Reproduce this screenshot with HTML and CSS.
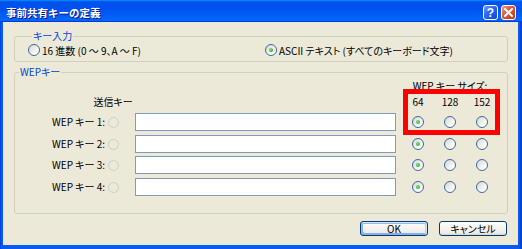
FILE: index.html
```html
<!DOCTYPE html>
<html lang="ja">
<head>
<meta charset="utf-8">
<title>事前共有キーの定義</title>
<link rel="stylesheet" href="styles.css">
</head>
<body>
<div class="window">
  <div class="titlebar">
    <span class="title">事前共有キーの定義</span>
    <div class="controls">
      <span class="tbtn help">?</span>
      <span class="tbtn close"><svg width="9" height="9" viewBox="0 0 9 9"><path d="M1 1 L8 8 M8 1 L1 8" stroke="#fff" stroke-width="2" stroke-linecap="square"/></svg></span>
    </div>
  </div>
  <div class="frame">
    <div class="client">
      <fieldset class="group g1">
        <legend>キー入力</legend>
        <div class="inputrow">
          <label class="opt first"><span class="radio"></span>16 進数 (0 ～ 9、A ～ F)</label>
          <label class="opt"><span class="radio checked"></span>ASCII テキスト (すべてのキーボード文字)</label>
        </div>
      </fieldset>
      <fieldset class="group g2">
        <legend>WEPキー</legend>
        <div class="keyrow head1">
          <div class="sizehead">WEP キー サイズ:</div>
        </div>
        <div class="keyrow head2">
          <div class="txhead"><span>送信キー</span></div>
          <div class="sz s64">64</div>
          <div class="sz">128</div>
          <div class="sz">152</div>
        </div>
        <div class="keyrow key">
          <div class="klabel">WEP キー 1:</div>
          <span class="dradio"></span>
          <span class="field"></span>
          <span class="radio checked"></span>
          <span class="radio"></span>
          <span class="radio"></span>
        </div>
        <div class="keyrow key">
          <div class="klabel">WEP キー 2:</div>
          <span class="dradio"></span>
          <span class="field"></span>
          <span class="radio checked"></span>
          <span class="radio"></span>
          <span class="radio"></span>
        </div>
        <div class="keyrow key">
          <div class="klabel">WEP キー 3:</div>
          <span class="dradio"></span>
          <span class="field"></span>
          <span class="radio checked"></span>
          <span class="radio"></span>
          <span class="radio"></span>
        </div>
        <div class="keyrow key">
          <div class="klabel">WEP キー 4:</div>
          <span class="dradio"></span>
          <span class="field"></span>
          <span class="radio checked"></span>
          <span class="radio"></span>
          <span class="radio"></span>
        </div>
      </fieldset>
      <div class="buttons">
        <button class="btn default">OK</button>
        <button class="btn">キャンセル</button>
      </div>
    </div>
  </div>
  <div class="annot"></div>
</div>
</body>
</html>
```
FILE: styles.css
```css
* { box-sizing: border-box; }
html, body { margin: 0; padding: 0; }
body {
  width: 522px;
  height: 249px;
  overflow: hidden;
  background: #ffffff;
  font-family: "Noto Sans CJK JP", "Liberation Sans", sans-serif;
  font-size: 10px;
  font-feature-settings: "palt";
  color: #000;
}
.window {
  position: relative;
  width: 522px;
  height: 249px;
  display: flex;
  flex-direction: column;
}
.titlebar {
  height: 22px;
  flex: none;
  display: flex;
  align-items: flex-start;
  padding: 0 6px 0 6px;
  background: linear-gradient(180deg, #0997ff, #0053ee 8%, #0050ee 40%, #0066ff 88%, #0066ff 93%, #005bff 95%, #003dd7 96%, #003dd7);
}
.title {
  margin-top: 6px;
  color: #fff;
  font-weight: bold;
  font-size: 10.5px;
  line-height: 13px;
  font-feature-settings: normal;
  text-shadow: 1px 1px #0f1089;
}
.controls {
  margin-left: auto;
  margin-top: 5px;
  display: flex;
  gap: 3px;
}
.tbtn {
  width: 15px;
  height: 15px;
  border: 1px solid #fff;
  border-radius: 3px;
  display: flex;
  align-items: center;
  justify-content: center;
  color: #fff;
  font-family: "Liberation Sans", sans-serif;
  font-weight: bold;
  font-size: 12px;
  line-height: 1;
}
.help {
  background: linear-gradient(135deg, #6a9cff, #2a66f4 45%, #0c47d8);
}
.close {
  background: linear-gradient(135deg, #f0a28a, #e05a34 40%, #c33a16);
}
.frame {
  flex: 1;
  display: flex;
  padding: 0 4px 4px 3px;
  background: linear-gradient(90deg, #0040d8, #0a5cf0 2px, #0a5cf0 calc(100% - 3px), #0032c8);
}
.client {
  flex: 1;
  display: flex;
  flex-direction: column;
  background: #ece9d8;
  padding: 8px 10px 0 11px;
}
.group {
  margin: 0;
  min-width: 0;
  border: 1px solid #d0d0bf;
  border-radius: 3px;
}
.group legend {
  margin-left: 4px;
  padding: 0 1px;
  line-height: 12px;
  color: #0046d5;
}
.g1 {
  padding: 0 0 3px 13px;
}
.inputrow {
  display: flex;
  height: 16px;
  align-items: center;
}
.opt {
  display: flex;
  align-items: center;
  gap: 2px;
  white-space: nowrap;
}
.opt.first { width: 237px; }
.radio {
  display: block;
  width: 12px;
  height: 12px;
  border-radius: 50%;
  border: 1px solid #3a6aa0;
  background: linear-gradient(135deg, #d8d6cc, #ffffff 80%);
  position: relative;
  flex: none;
}
.radio.checked::after {
  content: "";
  position: absolute;
  left: 3px;
  top: 3px;
  width: 4px;
  height: 4px;
  border-radius: 50%;
  background: radial-gradient(circle at 40% 40%, #7ee07a, #1fa31f);
}
.g2 {
  margin-top: 4px;
  padding: 2px 0 13px 0;
}
.keyrow {
  display: grid;
  grid-template-columns: 90px 16px 281px 32px 32px 32px;
  align-items: start;
}
.head1 { height: 16px; }
.head2 { height: 17px; }
.key { height: 21.667px; }
.sizehead {
  grid-column: 4 / 7;
  text-align: center;
  line-height: 12px;
  white-space: nowrap;
}
.txhead {
  grid-column: 2;
  display: flex;
  justify-content: center;
  white-space: nowrap;
  line-height: 12px;
}
.sz {
  text-align: center;
  line-height: 12px;
}
.sz.s64 { grid-column: 4; }
.klabel {
  text-align: right;
  line-height: 18px;
  white-space: nowrap;
}
.dradio {
  justify-self: center;
  margin-top: 4px;
  width: 11px;
  height: 11px;
  border-radius: 50%;
  border: 1px solid #d2cfc2;
  background: #ebe8dc;
}
.field {
  display: block;
  margin-left: 14px;
  width: 261px;
  height: 18px;
  border: 1px solid #7f9db9;
  background: #fff;
}
.keyrow .radio {
  justify-self: center;
  margin-top: 3px;
}
.buttons {
  margin-top: 7px;
  display: flex;
  justify-content: flex-end;
  gap: 11px;
  padding-right: 1px;
}
.btn {
  width: 68px;
  height: 15px;
  padding: 0;
  border: 1px solid #003c74;
  border-radius: 3px;
  background: linear-gradient(180deg, #ffffff, #ecebe6 86%, #d6d0c5);
  font-family: inherit;
  font-size: 10px;
  font-feature-settings: "palt";
  line-height: 13px;
  color: #000;
}
.btn.default {
  box-shadow: inset -1px 1px #cee7ff, inset 1px 2px #98b8ea, inset -2px 2px #bcd4f6, inset 1px -1px #89ade4, inset 2px -2px #89ade4;
}
.annot {
  position: absolute;
  left: 403px;
  top: 89px;
  width: 97px;
  height: 46px;
  border: 5px solid #ff0000;
}
```
